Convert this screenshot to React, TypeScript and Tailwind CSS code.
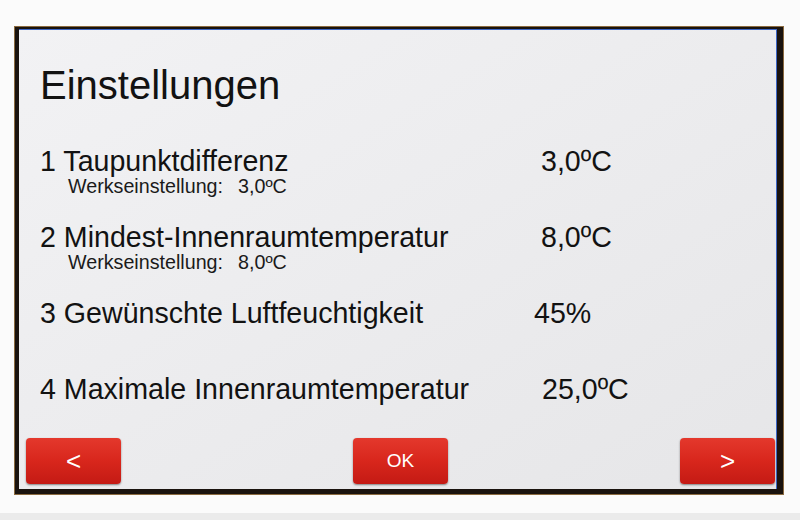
import React from "react";

type Row = { label: string; sub?: string; value: string; valueClass: string; h: string };

const rows: Row[] = [
  { label: "1 Taupunktdifferenz", sub: "3,0ºC", value: "3,0ºC", valueClass: "", h: "h-[76px]" },
  { label: "2 Mindest-Innenraumtemperatur", sub: "8,0ºC", value: "8,0ºC", valueClass: "", h: "h-[76px]" },
  { label: "3 Gewünschte Luftfeuchtigkeit", value: "45%", valueClass: "-ml-[7px]", h: "h-[76px]" },
  { label: "4 Maximale Innenraumtemperatur", value: "25,0ºC", valueClass: "ml-[1px]", h: "h-[28px]" },
];

function RedButton({ children, textClass }: { children: React.ReactNode; textClass: string }) {
  return (
    <div
      className={
        "w-[95px] h-[46px] rounded-[4px] bg-gradient-to-b from-[#e4382c] via-[#d8261c] to-[#c41a14] text-white flex items-center justify-center shadow-[0_1px_2px_rgba(0,0,0,0.45)] " +
        textClass
      }
    >
      {children}
    </div>
  );
}

export default function App() {
  return (
    <div
      className="w-[800px] h-[520px] bg-[#fbfbfb] overflow-hidden flex flex-col"
      style={{ fontFamily: '"Liberation Sans", Arial, sans-serif' }}
    >
      <div className="ml-[14px] mt-[26px] w-[770px] h-[469px] bg-[#1a130e] pt-[3px] pl-[5px] pr-[7px] pb-[6px] flex shadow-[inset_0_0_0_1px_#8a6a40]">
        <div className="flex-1 h-full bg-gradient-to-br from-[#f2f2f4] via-[#ececee] to-[#e6e6e8] border-t border-r border-[#3d66c6] flex flex-col pt-[35px] text-[#121212]">
          <div className="pl-[21px]">
            <div className="text-[40px] leading-[40px] h-[40px]">Einstellungen</div>
            <div className="mt-[42px] flex flex-col">
              {rows.map((r) => (
                <div key={r.label} className={"grid grid-cols-[501px_1fr] " + r.h}>
                  <div className="flex flex-col">
                    <div className="text-[28.6px] leading-[28px] whitespace-nowrap">{r.label}</div>
                    {r.sub && (
                      <div className="text-[19.7px] leading-[18px] pl-[28px] mt-[2px] whitespace-nowrap text-[#1a1a1a] flex">
                        <span>Werkseinstellung:</span>
                        <span className="ml-[15px]">{r.sub}</span>
                      </div>
                    )}
                  </div>
                  <div className={"text-[28.6px] leading-[28px] whitespace-nowrap " + r.valueClass}>{r.value}</div>
                </div>
              ))}
            </div>
          </div>
          <div className="mt-auto flex justify-between pl-[7px] pr-[1px] pb-[5px]">
            <RedButton textClass="text-[26px]">&lt;</RedButton>
            <RedButton textClass="text-[19px]">OK</RedButton>
            <RedButton textClass="text-[26px]">&gt;</RedButton>
          </div>
        </div>
      </div>
      <div className="mt-[18px] h-[7px] bg-[#ebebeb]" />
    </div>
  );
}
